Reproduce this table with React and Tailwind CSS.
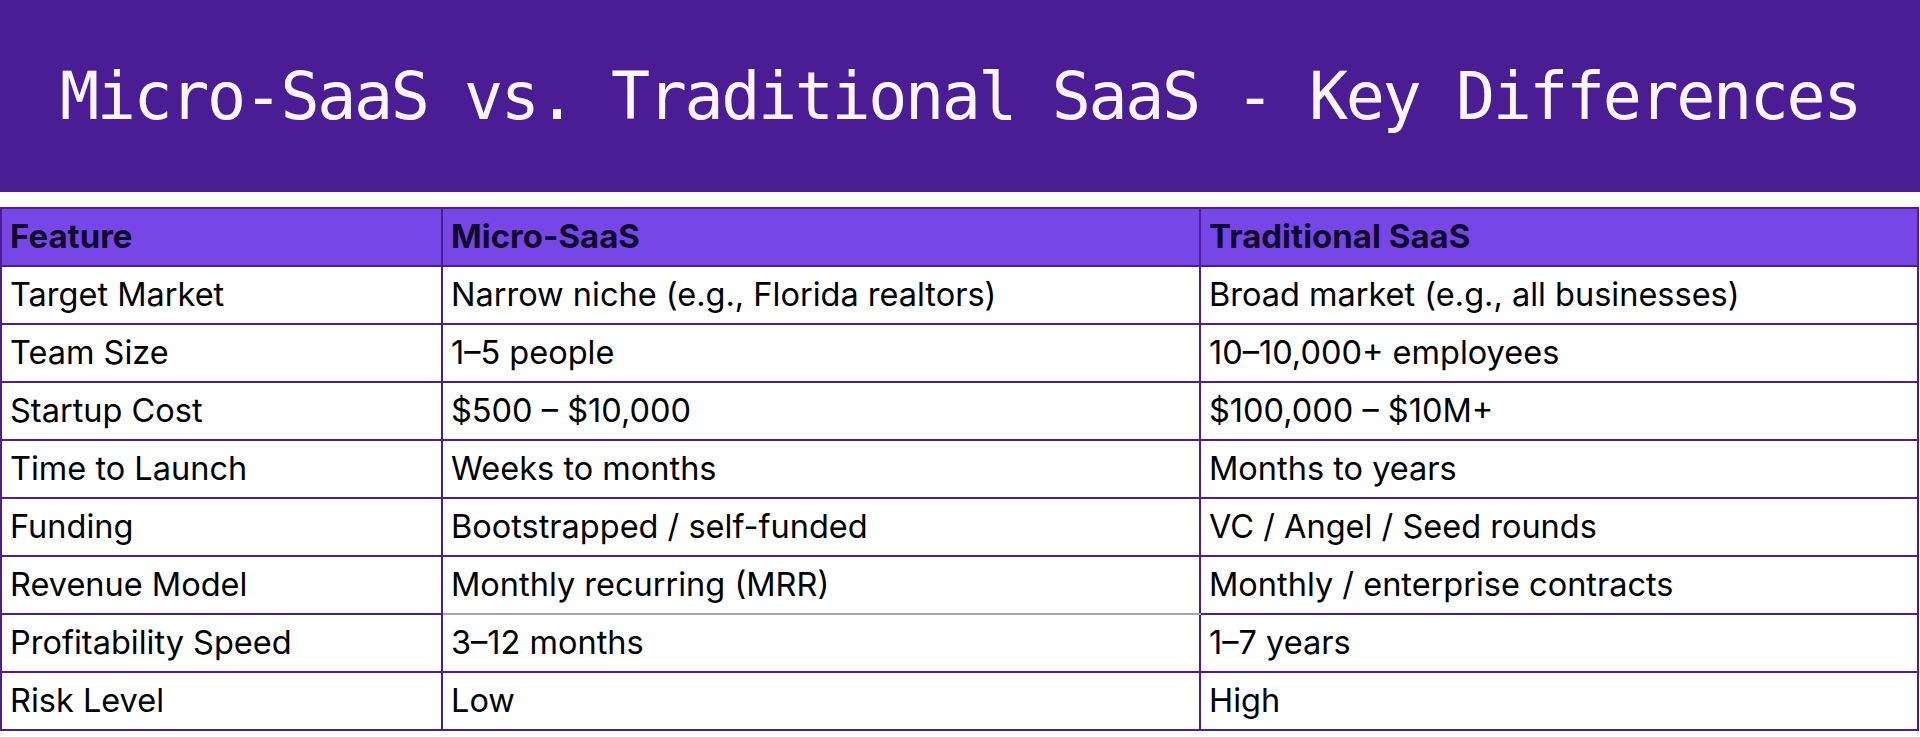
import React from 'react';

const rows = [
    ['Target Market', 'Narrow niche (e.g., Florida realtors)', 'Broad market (e.g., all businesses)'],
    ['Team Size', '1–5 people', '10–10,000+ employees'],
    ['Startup Cost', '$500 – $10,000', '$100,000 – $10M+'],
    ['Time to Launch', 'Weeks to months', 'Months to years'],
    ['Funding', 'Bootstrapped / self-funded', 'VC / Angel / Seed rounds'],
    ['Revenue Model', 'Monthly recurring (MRR)', 'Monthly / enterprise contracts'],
    ['Profitability Speed', '3–12 months', '1–7 years'],
    ['Risk Level', 'Low', 'High'],
];

const App = () => {
    return (
        <div className="w-[1920px] h-[737px] bg-white overflow-hidden">
            <div className="h-[192px] bg-[#4a1d94] flex items-center justify-center">
                <h1 className="text-[65px] leading-none text-[#fdf6ff] font-['DejaVu_Sans_Mono',monospace] tracking-[-2.4px]">
                    Micro-SaaS vs. Traditional SaaS - Key Differences
                </h1>
            </div>

            <table className="mt-[15px] w-[1919px] border-collapse table-fixed font-['Inter',sans-serif] text-[32.5px]">
                <colgroup>
                    <col className="w-[441px]" />
                    <col className="w-[758px]" />
                    <col />
                </colgroup>
                <thead>
                    <tr className="h-[58px] bg-[#7646e6] text-[#0f0a2c]">
                        <th className="border-2 border-[#4c1d95] px-[8px] text-left font-bold text-[33px]">Feature</th>
                        <th className="border-2 border-[#4c1d95] px-[8px] text-left font-bold text-[33px]">Micro-SaaS</th>
                        <th className="border-2 border-[#4c1d95] px-[8px] text-left font-bold text-[33px]">Traditional SaaS</th>
                    </tr>
                </thead>
                <tbody className="text-black">
                    {rows.map((r, i) => (
                        <tr key={r[0]} className="h-[58px]">
                            <td className="border-2 border-[#4c1d95] px-[8px] leading-none">{r[0]}</td>
                            <td className={`border-2 border-[#4c1d95] px-[8px] leading-none ${i === 5 ? 'border-b-[#a7a3b3]' : ''}`}>{r[1]}</td>
                            <td className="border-2 border-[#4c1d95] px-[8px] leading-none">{r[2]}</td>
                        </tr>
                    ))}
                </tbody>
            </table>
        </div>
    );
};

export default App;
